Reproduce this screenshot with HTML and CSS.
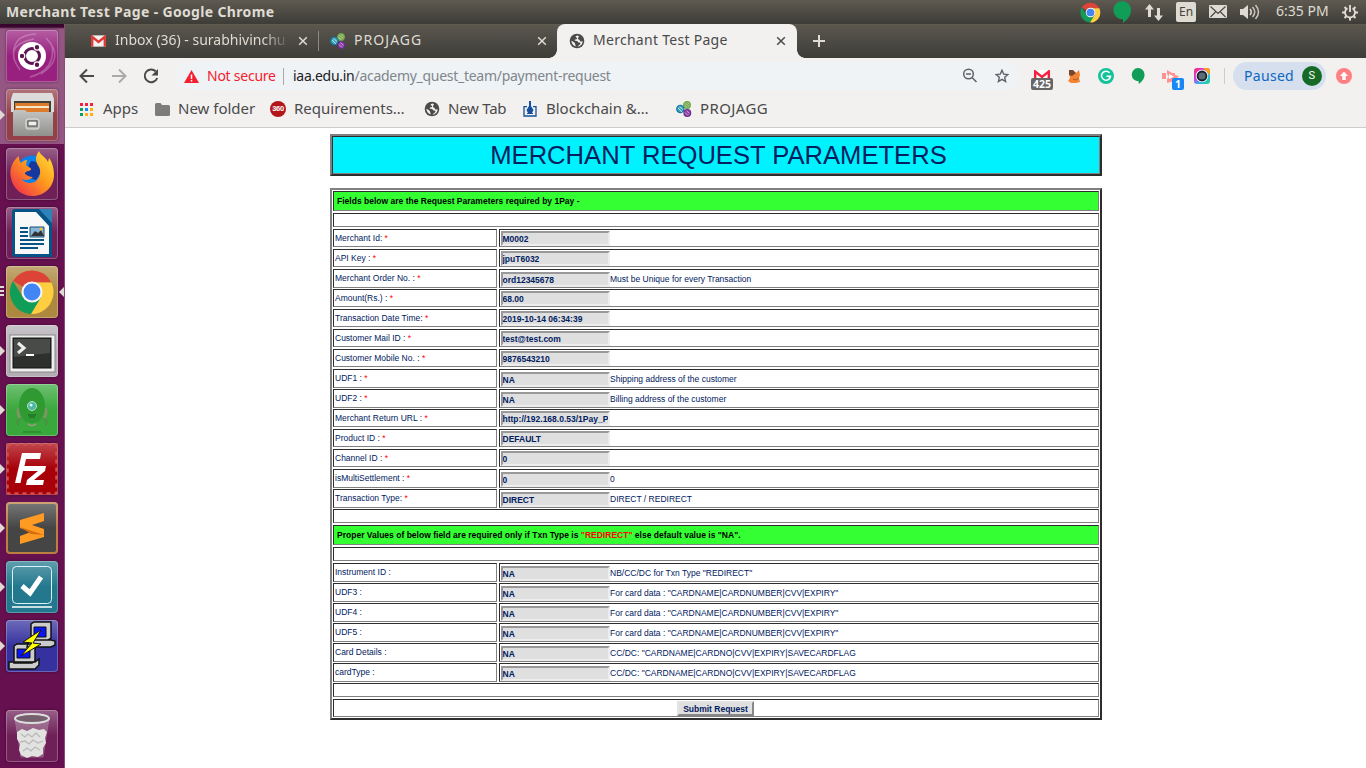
FILE: index.html
```html
<!DOCTYPE html>
<html lang="en">
<head>
<meta charset="utf-8">
<title>Merchant Test Page</title>
<link rel="stylesheet" href="styles.css">
</head>
<body>
<svg class="defs" width="0" height="0">
  <defs>
    <linearGradient id="steel" x1="0" y1="0" x2="0" y2="1"><stop offset="0" stop-color="#c4c4c2"/><stop offset="1" stop-color="#90908d"/></linearGradient>
    <linearGradient id="fire" x1="1" y1="0" x2="0" y2="1"><stop offset="0" stop-color="#ffe63a"/><stop offset=".45" stop-color="#ff9a1d"/><stop offset="1" stop-color="#ee1c52"/></linearGradient>
    <linearGradient id="rainbow" x1="0" y1="0" x2="1" y2="1"><stop offset="0" stop-color="#ff2b6a"/><stop offset=".35" stop-color="#d93be0"/><stop offset=".65" stop-color="#24b9f2"/><stop offset="1" stop-color="#27d67b"/></linearGradient>
    <symbol id="chrome" viewBox="0 0 48 48">
      <path d="M24 24 4.100 12.500A23 23 0 0 1 44.200 14H24z" fill="#db4437"/>
      <path d="M4.100 12.500A23 23 0 0 0 23 47L34 30 24 24 14.500 29.500z" fill="#0f9d58"/>
      <path d="M24 14h20.200A23 23 0 0 1 23 47l10.500-17.500L24 24z" fill="#ffcd40"/>
      <circle cx="24" cy="24" r="11" fill="#f5f5f5"/><circle cx="24" cy="24" r="8.800" fill="#4285f4"/>
    </symbol>
    <symbol id="hang" viewBox="0 0 18 22"><path d="M9 0a9 9 0 0 1 9 9.200c0 5.500-4 9.800-8 12.800v-3.800A9 9 0 0 1 9 0z" fill="#0f9d58"/></symbol>
    <symbol id="globe" viewBox="0 0 16 16"><circle cx="8" cy="8" r="7.300" fill="#4a4a4a"/><path d="M8.300 2.500C6.500 3.200 6 4 7.300 4.600c1.600.6.500 2-.9 1.900-1.300.3-.7 1.400.4 1.300 1.500 0 2.200.8 2.500 1.700.8.300 2-.2 2.200.7-.3 1.500-1.900 1.700-3.100 3.500 3-.3 5.200-2.500 5.300-5.700-1 .9-2.800.6-3-.7-.2-1-1.500-.6-1.800-1.500 0-1.200 1.200-1.500.9-2.700zM2.300 7.800c.2 2.500 1.700 4.700 4.200 5.600.4-1.300-.4-1.800-.6-2.900-.1-1.300-1.400-1.300-3.600-2.700z" fill="#f2f1f0"/></symbol>
    <symbol id="close" viewBox="0 0 10 10"><path d="m1.200 1.200 7.600 7.600M8.800 1.200 1.200 8.800" fill="none" stroke="currentColor" stroke-width="1.500"/></symbol>
    <symbol id="projagg" viewBox="0 0 16 16">
      <g fill="none" stroke-width="1.300"><circle cx="11" cy="4" r="3.300" stroke="#6da544" fill="#a5c783"/><path d="m8.500 3 4 3M10 1.500l3.500 3" stroke="#5e913b" stroke-width=".8"/><circle cx="4.300" cy="8" r="3.600" stroke="#187ba4" fill="#44a6be"/><path d="m2 7 4 4M3.500 5.500l3.500 3" stroke="#cfe9f3" stroke-width=".8"/><circle cx="11.300" cy="12" r="3.300" stroke="#6b2d90" fill="#8f48a8"/><path d="m9 11.500 3 3M10.500 9.500l3 3" stroke="#d0a8dc" stroke-width=".8"/></g>
    </symbol>
    <symbol id="gmail" viewBox="0 0 16 12"><path d="M0 0h16v12H0z" fill="#f3f3f3"/><path d="M1.300 12V1.500L8 7l6.700-5.500V12" fill="none" stroke="#dd3a34" stroke-width="2.500"/></symbol>
  </defs>
</svg>

<header class="panel">
  <span class="panel-title">Merchant Test Page - Google Chrome</span>
  <div class="tray">
    <svg class="t-chrome" width="21" height="21"><use href="#chrome"/></svg>
    <svg class="t-hang" width="18" height="22"><use href="#hang"/></svg>
    <svg class="t-net" width="18" height="17" viewBox="0 0 18 17" fill="#dfdbd2"><path d="M4.500 0 9 5.500H6V13H3V5.500H0zM13.500 17 9 11.500h3V4h3v7.500h3z"/></svg>
    <span class="t-lang">En</span>
    <svg class="t-mail" width="18" height="14" viewBox="0 0 18 14"><rect width="18" height="13" rx="1" fill="#dfdbd2"/><path d="m1.500 1.500 7.500 7 7.500-7M1.500 12 6.500 7M16.500 12l-5-5" fill="none" stroke="#4b4943" stroke-width="1.200"/></svg>
    <svg class="t-sound" width="20" height="18" viewBox="0 0 20 18"><path d="M0 6h3l5-4v14l-5-4H0z" fill="#dfdbd2"/><g fill="none" stroke="#dfdbd2" stroke-width="1.500"><path d="M10 6q2.500 3 0 6"/><path d="M12.500 4q4.500 5 0 10" opacity=".85"/><path d="M15.500 2q6 7 0 14" opacity=".85"/></g></svg>
    <span class="t-time">6:35 PM</span>
    <svg class="t-gear" width="16" height="17" viewBox="0 0 16 17" fill="none" stroke="#dfdbd2"><path d="M5.500 4.200A5 5 0 1 0 10.500 4.200M8 1v7" stroke-width="1.900"/><path d="M8 13.500V16.500M0 8.500h3M13 8.500h3M2.500 14l2-2M11.500 12l2 2M2.500 3l2 2M13.500 3l-2 2" stroke-width="2"/></svg>
  </div>
</header>

<div class="desktop">
  <nav class="launcher">
    <div class="tile ubuntu"><svg viewBox="0 0 52 52"><g fill="none" stroke="#fff" opacity=".25"><path d="M8 30Q4 5 30 4M14 40Q-4 15 28 9M40 8q20 20-5 36M46 15Q50 40 24 47" stroke-width="1.500"/></g><circle cx="26" cy="26" r="14" fill="#fff"/><circle cx="26" cy="26" r="7.500" fill="none" stroke="#5c1550" stroke-width="3"/><g stroke="#fff" stroke-width="1.200" fill="#5c1550"><circle cx="16" cy="26" r="2.800"/><circle cx="31" cy="17.300" r="2.800"/><circle cx="31" cy="34.700" r="2.800"/></g></svg></div>
    <div class="tile files"><i class="run"></i><svg viewBox="0 0 52 52"><path d="M7 4h39l2 6v13H5V10z" fill="#dcdcda"/><path d="M8 12h37v12H8z" fill="#3f3f3e"/><path d="M9 14h34v9H9z" fill="#de7b2a"/><path d="M10 17h33v2H10z" fill="#f9e7cc"/><path d="M7 21h12l2 2h26v24H7z" fill="url(#steel)"/><rect x="20" y="30" width="13" height="10" rx="2" fill="#b0b0ac" stroke="#e3e3e1"/><rect x="22" y="32" width="9" height="5" fill="#eee" stroke="#444"/></svg></div>
    <div class="tile plain"><svg viewBox="0 0 52 52"><circle cx="27" cy="25" r="17.500" fill="#0a84ea"/><path d="M25 13q10 0 10 11l-5 8-13-4z" fill="#1637a0"/><path d="M33 3c-5 7-3 11 0 16 3 6 0 15-8 16-5 0-8-2-9-4 4 2 8 1 11-2-4 0-6-2-8-3 0-3 4-3 6-4 1-2-3-3-5-5l1-5c-3 0-5 2-6 3-2-2-2-5-2-7C6 13 3 22 5 30c2 11 11 18 22 18s21-9 21-21c0-7-2-13-5-17l-1 4C40 9 35 8 33 3z" fill="url(#fire)"/></svg></div>
    <div class="tile plain"><svg viewBox="0 0 52 52"><path d="M9 2h37v48H9q-3 0-3-3V5q0-3 3-3z" fill="#075386"/><path d="M9 5h21l13 14v28H9z" fill="#f8f8f8"/><path d="M33 2h13v14z" fill="#2d82b7"/><path d="M14 21h8M14 25h8M14 29h8M14 33h24M14 37h24M14 41h18" stroke="#075386" stroke-width="2"/><path d="M24 20h14v10H24z" fill="#86b6dc" stroke="#124f73"/><path d="m25 29 4-5 3 2 3-3 3 6z" fill="#333"/><circle cx="35" cy="22" r="1.500" fill="#f7bf29"/></svg></div>
    <div class="tile gold"><i class="run multi"></i><i class="focus"></i><svg viewBox="0 0 52 52"><use href="#chrome" x="3" y="3" width="46" height="46"/></svg></div>
    <div class="tile term"><i class="run"></i><svg viewBox="0 0 52 52"><rect x="4" y="10" width="45" height="37" fill="#eee" stroke="#888"/><rect x="7" y="13" width="38" height="30" fill="#2e302e" stroke="#111"/><path d="M8 14h36v14L8 32z" fill="#494b48"/><path d="m12 18 6 5-6 5" fill="none" stroke="#eee" stroke-width="3"/><path d="M20 30h8" stroke="#fff" stroke-width="2"/></svg></div>
    <div class="tile green"><i class="run"></i><svg viewBox="0 0 52 52"><path d="M14 34q-3-5-1-10M38 34q3-5 1-10" fill="none" stroke="#7d9560" stroke-width="3.500"/><path d="M26 4c7 0 13 8 13 18S34 39 26 39 13 32 13 22 19 4 26 4z" fill="#2f9a32"/><circle cx="26" cy="22" r="4.500" fill="#4db7a3" stroke="#b8e1ca"/><circle cx="25" cy="21" r="1.500" fill="#d2fff0"/><path d="M22 31h8M23 33h6" stroke="#17641e"/><path d="M15 35q-5 0-3 6M37 35q5 0 3 6" fill="none" stroke="#4f8f44" stroke-width="2"/><path d="M22 40q4 3 8 0" stroke="#8ca06d" stroke-width="2" fill="none"/><path d="M17 48h18" stroke="#237b28"/></svg></div>
    <div class="tile red"><i class="run"></i><svg viewBox="0 0 52 52"><rect x="1.500" y="1.500" width="49" height="49" fill="none" stroke="#c95353" stroke-width="2.500" stroke-dasharray="4 4"/><path d="M16 10h19l-1 6H20l-1.500 7H30l-1 5H17l-2.500 12H9z" fill="#fff"/><path d="M23 23h17l-1 5-11 9h10l-1 5H20l1-5 11-9H22z" fill="#fff"/></svg></div>
    <div class="tile sublime"><i class="run"></i><svg viewBox="0 0 52 52"><path d="m14 18 24-7v8l-12 4 12 4v8l-24 7v-8l11-4-11-4z" fill="#ff9b22"/><path d="m14 25 24 8-13-1z" fill="#d76c0b"/></svg></div>
    <div class="tile teal"><i class="run"></i><svg viewBox="0 0 52 52"><rect x="6.500" y="5.500" width="39" height="37" rx="4" fill="none" stroke="#d9f4f7"/><path d="M6 46h40" stroke="#fff" stroke-width="1.500"/><path d="m16 25 8 7 11-16" fill="none" stroke="#fff" stroke-width="5"/></svg></div>
    <div class="tile putty"><i class="run"></i><svg viewBox="0 0 52 52"><g fill="#ccc" stroke="#111" stroke-width="1.500"><path d="m25 4 3-2h17v16l-3 2H25zM23 20h22l4 1v4l-4 2H21zM8 26l3-2h18v17l-3 2H8zM3 42h26l4-3v6l-4 4H3z"/></g><path d="M28 7h12v10H28zM11 29h13v9H11z" fill="#0a14f5" stroke="#111"/><path d="m35 10-18 12 9 1-11 13 20-12-8-1z" fill="#ff0" stroke="#111"/></svg></div>
    <div class="tile plain trash"><svg viewBox="0 0 52 52"><path d="m9 8 6 39h22l6-39" fill="#d9d9d9" opacity=".3" stroke="#eee"/><path d="m11 22 5-3 5 2 6-3 6 2 5-1 3 3-2 6 1 5-3 5v6l-5 3-6-1-5 2-6-3-2-5 1-6-3-5z" fill="#e2e2e0"/><path d="m15 24 4 3 3-3 4 3 4-4 4 4M14 32l5-1 4 3 4-4 5 3 5-2M17 41l4-3 4 3 4-4 5 3" fill="none" stroke="#b9b9b7" stroke-width="1.300"/><ellipse cx="26" cy="8.500" rx="17" ry="4.500" fill="#76606e" stroke="#ddd" stroke-width="2"/></svg></div>
  </nav>

  <main class="browser">
    <div class="tabs">
      <div class="tab tab-mail"><svg width="15" height="12"><use href="#gmail"/></svg><span class="tab-text fade">Inbox (36) - surabhivinchu</span><svg class="x" width="10" height="10"><use href="#close"/></svg></div>
      <div class="tab tab-proj"><svg width="16" height="16"><use href="#projagg"/></svg><span class="tab-text caps">PROJAGG</span><svg class="x" width="10" height="10"><use href="#close"/></svg></div>
      <div class="tab active"><svg width="16" height="16"><use href="#globe"/></svg><span class="tab-text">Merchant Test Page</span><svg class="x" width="10" height="10"><use href="#close"/></svg></div>
      <svg class="plus" width="12" height="12" viewBox="0 0 12 12"><path d="M6 0v12M0 6h12" stroke="#dfdbd2" stroke-width="2"/></svg>
    </div>
    <div class="toolbar">
      <svg class="nav" width="16" height="16" viewBox="0 0 16 16" fill="none" stroke="#4a4a4a" stroke-width="2"><path d="M15 8H2M8 1.500 1.500 8 8 14.500"/></svg>
      <svg class="nav" width="16" height="16" viewBox="0 0 16 16" fill="none" stroke="#aaa" stroke-width="2"><path d="M1 8h13M8 1.500 14.500 8 8 14.500"/></svg>
      <svg class="nav" width="16" height="16" viewBox="0 0 16 16"><path d="M12.700 3.300A6.400 6.400 0 1 0 14.200 10" fill="none" stroke="#4a4a4a" stroke-width="2"/><path d="M15 1v6.500H8.500z" fill="#4a4a4a"/></svg>
      <div class="omnibox">
        <svg width="15" height="13" viewBox="0 0 15 13"><path d="M7.500 0 15 13H0z" fill="#f5202f"/><path d="M7.500 4.500V9M7.500 10v1.500" stroke="#fff" stroke-width="1.500"/></svg>
        <span class="insecure">Not secure</span>
        <span class="url"><b>iaa.edu.in</b>/academy_quest_team/payment-request</span>
        <svg class="mag" width="16" height="16" viewBox="0 0 16 16" fill="none" stroke="#5f6368" stroke-width="1.500"><circle cx="6.500" cy="6" r="4.800"/><path d="m10 9.500 4.500 4.500M4 6h5"/></svg>
        <svg class="star" width="14" height="14" viewBox="0 0 14 14"><path d="m7 1.200 1.700 3.900 4.200.4-3.200 2.800.9 4.200L7 10.300l-3.600 2.200.9-4.200-3.200-2.800 4.200-.4z" fill="none" stroke="#5f6368" stroke-width="1.400"/></svg>
      </div>
      <div class="ext e-mail"><svg width="16" height="12" viewBox="0 0 16 12"><path d="M0 0h16v12H0z" fill="#fff"/><path d="M1.200 12V1.500L8 7l6.800-5.500V12" fill="none" stroke="#f5203f" stroke-width="2.400"/></svg><span class="badge">425</span></div>
      <div class="ext e-fox"><svg width="12" height="13" viewBox="0 0 12 13"><path d="m1 0 3 2 4 1 3-3 1 5-1 3 1 4-4 1H3l-3-2 2-3-1-4z" fill="#f48332"/><path d="M1 0h4l3 3-4 3-3-1z" fill="#76472c"/><path d="m5 9 3 1 3-2" stroke="#b75622" fill="none"/></svg></div>
      <div class="ext"><svg width="16" height="16" viewBox="0 0 16 16"><circle cx="8" cy="8" r="8" fill="#15c39a"/><path d="M11.500 4.800a4.500 4.500 0 1 0 1 3.500H8.500M11 10l2-1.700" fill="none" stroke="#fff" stroke-width="1.500"/></svg></div>
      <div class="ext"><svg width="14" height="16"><use href="#hang"/></svg></div>
      <div class="ext e-one"><svg width="17" height="13" viewBox="0 0 17 13"><path d="M0 3h4v6H0zM5 0l5 3h3v2l4 1-5 5-7 2V9l2-2-2-3z" fill="#ff9292"/><path d="m7 4 5 2.500L7 9z" fill="#fff"/></svg><span class="badge blue">1</span></div>
      <div class="ext"><svg width="16" height="16" viewBox="0 0 16 16"><rect width="16" height="16" rx="3" fill="url(#rainbow)"/><path d="M9 0h4q3 0 3 3v4z" fill="#ff9f16"/><circle cx="8" cy="8" r="6.200" fill="#fff"/><circle cx="8" cy="8" r="4.500" fill="#5b6b75" stroke="#172029" stroke-width="1.800"/></svg></div>
      <div class="divider"></div>
      <div class="paused"><span>Paused</span><i>S</i></div>
      <svg class="update" width="16" height="16" viewBox="0 0 16 16"><circle cx="8" cy="8" r="8" fill="#ff8080"/><path d="M8 3.500 12 8H9.700v4H6.300V8H4z" fill="#fff"/></svg>
    </div>
    <div class="bookmarks">
      <div class="bm b1"><svg width="16" height="16" viewBox="0 0 16 16"><path d="M1 2h3v3H1zM6 2h3v3H6z" fill="#f4203f"/><path d="M11 2h3v3h-3z" fill="#f4203f"/><path d="M1 7h3v3H1zM1 12h3v3H1z" fill="#0ca060"/><path d="M6 7h3v3H6z" fill="#1688f2"/><path d="M11 7h3v3h-3zM6 12h3v3H6zM11 12h3v3h-3z" fill="#fdaf15"/></svg><span>Apps</span></div>
      <div class="bm b2"><svg width="15" height="13" viewBox="0 0 15 13"><path d="M1.500 0h4L7 2h6.500Q15 2 15 3.500v8q0 1.500-1.500 1.500h-12Q0 13 0 11.500v-10Q0 0 1.500 0z" fill="#7c7c7c"/></svg><span>New folder</span></div>
      <div class="bm b3"><i class="b360">360</i><span>Requirements…</span></div>
      <div class="bm b4"><svg width="16" height="16"><use href="#globe"/></svg><span>New Tab</span></div>
      <div class="bm b5"><svg width="14" height="16" viewBox="0 0 14 16"><path d="M4 5.700H1V15h12V5.700h-3" fill="none" stroke="#174f9c" stroke-width="1.300"/><path d="M6 0h2v5l2.500 4L9 12h1v1H4v-1h1L3.500 9 6 5z" fill="#174f9c"/></svg><span>Blockchain &amp;…</span></div>
      <div class="bm b6"><svg width="16" height="16"><use href="#projagg"/></svg><span class="caps">PROJAGG</span></div>
    </div>
    <section class="page">
      <h1 class="title"><span>MERCHANT REQUEST PARAMETERS</span></h1>
      <form class="params">
        <div class="head">Fields below are the Request Parameters required by 1Pay -</div>
        <div class="blank"></div>
        <div class="row"><label>Merchant Id: <em>*</em></label><div><span class="field">M0002</span></div></div>
        <div class="row"><label>API Key : <em>*</em></label><div><span class="field">jpuT6032</span></div></div>
        <div class="row"><label>Merchant Order No. : <em>*</em></label><div><span class="field">ord12345678</span>Must be Unique for every Transaction</div></div>
        <div class="row"><label>Amount(Rs.) : <em>*</em></label><div><span class="field">68.00</span></div></div>
        <div class="row"><label>Transaction Date Time: <em>*</em></label><div><span class="field">2019-10-14 06:34:39</span></div></div>
        <div class="row"><label>Customer Mail ID : <em>*</em></label><div><span class="field">test@test.com</span></div></div>
        <div class="row"><label>Customer Mobile No. : <em>*</em></label><div><span class="field">9876543210</span></div></div>
        <div class="row"><label>UDF1 : <em>*</em></label><div><span class="field">NA</span>Shipping address of the customer</div></div>
        <div class="row"><label>UDF2 : <em>*</em></label><div><span class="field">NA</span>Billing address of the customer</div></div>
        <div class="row"><label>Merchant Return URL : <em>*</em></label><div><span class="field">http://192.168.0.53/1Pay_P</span></div></div>
        <div class="row"><label>Product ID : <em>*</em></label><div><span class="field">DEFAULT</span></div></div>
        <div class="row"><label>Channel ID : <em>*</em></label><div><span class="field">0</span></div></div>
        <div class="row"><label>isMultiSettlement : <em>*</em></label><div><span class="field">0</span>0</div></div>
        <div class="row"><label>Transaction Type: <em>*</em></label><div><span class="field">DIRECT</span>DIRECT / REDIRECT</div></div>
        <div class="blank"></div>
        <div class="head">Proper Values of below field are required only if Txn Type is <em>"REDIRECT"</em> else default value is "NA".</div>
        <div class="blank"></div>
        <div class="row"><label>Instrument ID :</label><div><span class="field">NA</span>NB/CC/DC for Txn Type "REDIRECT"</div></div>
        <div class="row"><label>UDF3 :</label><div><span class="field">NA</span>For card data : "CARDNAME|CARDNUMBER|CVV|EXPIRY"</div></div>
        <div class="row"><label>UDF4 :</label><div><span class="field">NA</span>For card data : "CARDNAME|CARDNUMBER|CVV|EXPIRY"</div></div>
        <div class="row"><label>UDF5 :</label><div><span class="field">NA</span>For card data : "CARDNAME|CARDNUMBER|CVV|EXPIRY"</div></div>
        <div class="row"><label>Card Details :</label><div><span class="field">NA</span>CC/DC: "CARDNAME|CARDNO|CVV|EXPIRY|SAVECARDFLAG</div></div>
        <div class="row"><label>cardType :</label><div><span class="field">NA</span>CC/DC: "CARDNAME|CARDNO|CVV|EXPIRY|SAVECARDFLAG</div></div>
        <div class="blank"></div>
        <div class="submit"><button type="button">Submit Request</button></div>
      </form>
    </section>
  </main>
</div>
</body>
</html>
```
FILE: styles.css
```css
* { box-sizing: border-box; }
body { margin: 0; width: 1366px; height: 768px; overflow: hidden; background: #fff; font-family: "Noto Sans", "Open Sans", sans-serif; white-space: nowrap; }
svg { display: block; flex: none; }
.defs { position: absolute; }
em, i, b { font-style: normal; font-weight: inherit; }

.panel { height: 24px; display: flex; justify-content: space-between; align-items: center; background: linear-gradient(#5e5a51, #3d3c37); color: #dfdbd2; padding: 0 8px 0 6px; }
.panel-title { font-size: 14px; font-weight: 700; line-height: 24px; letter-spacing: .34px; }
.tray { display: flex; align-items: center; height: 24px; }
.t-chrome { margin-right: 12px; }
.t-hang { margin-right: 14px; }
.t-net { margin-right: 13px; }
.t-lang { width: 20px; height: 20px; border-radius: 2px; background: #dfdbd2; color: #45433d; font-size: 12px; line-height: 20px; text-align: center; margin-right: 13px; }
.t-mail { margin-right: 13px; }
.t-sound { margin-right: 16px; }
.t-time { width: 66px; font-size: 14px; line-height: 22px; height: 24px; }

.desktop { display: flex; height: 744px; }
.launcher { width: 65px; flex: none; display: flex; flex-direction: column; gap: 7px; padding: 6px 0 0 6px; background: linear-gradient(#39062f 0, #39062f 3px, transparent 5px), linear-gradient(#955684 0, #955684 120px, #66104f 120px, #66104f 100%); border-right: 1px solid #8b4a7a; }
.tile { position: relative; width: 52px; height: 52px; flex: none; border-radius: 4px; box-shadow: inset 0 0 0 1px rgba(255,255,255,.25), 0 0 3px rgba(0,0,0,.4); }
.tile svg { position: relative; z-index: 1; width: 52px; height: 52px; }
.tile::after { content: ""; position: absolute; inset: 0; border-radius: 4px; background: linear-gradient(rgba(255,255,255,.28), transparent 50%); }
.ubuntu { background: #98207f; }
.files { background: #93404a; }
.plain { background: #6f2059; }
.gold { background: #ad8940; }
.term { background: #b4adb4; }
.green { background: #39a83c; }
.red { background: #a80008; }
.sublime { background: #454545; box-shadow: inset 0 0 0 2px #bb7f40; }
.teal { background: #23788e; }
.putty { background: #35329f; }
.trash { margin-top: 31px; }
.run, .focus { position: absolute; left: -6px; top: 21px; border: 5px solid transparent; border-left-color: #dfdbd2; border-right: 0; }
.multi { border: 0; top: 20px; width: 4px; height: 11px; background: repeating-linear-gradient(#dfdbd2 0 2px, #66104f 2px 4px); }
.focus { left: auto; right: -6px; border: 5px solid transparent; border-right-color: #dfdbd2; border-left: 0; }

.browser { flex: 1; min-width: 0; display: flex; flex-direction: column; color: #4a4a4a; }
.tabs { height: 34px; display: flex; align-items: center; background: linear-gradient(#69604f 0, #5a574f 1px, #3d3c37); font-size: 14px; }
.tab { height: 34px; display: flex; align-items: center; color: #dfdbd2; }
.tab .x { margin-left: auto; }
.tab-text { margin-left: 8px; line-height: 20px; padding-bottom: 2px; letter-spacing: .28px; }
.tab-mail { width: 254px; padding: 0 11px 0 26px; position: relative; }
.tab-mail::after { content: ""; position: absolute; right: 0; top: 7px; width: 1px; height: 20px; background: #8c8981; }
.fade { width: 177px; margin-left: 9px; letter-spacing: 0; overflow: hidden; -webkit-mask-image: linear-gradient(90deg, #000 148px, transparent 175px); mask-image: linear-gradient(90deg, #000 148px, transparent 175px); }
.tab-proj { width: 238px; padding: 0 10px 0 11px; }
.tab .caps { letter-spacing: 1.050px; }
.active { width: 240px; padding: 0 11px 0 12px; background: #f2f1f0; color: #4a4a4a; border-radius: 8px 8px 0 0; position: relative; }
.active::before, .active::after { content: ""; position: absolute; bottom: 0; width: 8px; height: 8px; left: -8px; background: radial-gradient(circle at 0 0, transparent 7.5px, #f2f1f0 8px); }
.active::after { left: auto; right: -8px; background: radial-gradient(circle at 100% 0, transparent 7.5px, #f2f1f0 8px); }
.plus { margin-left: 16px; }

.toolbar { height: 36px; display: flex; align-items: center; background: #f2f1f0; padding-left: 14px; }
.nav { margin-right: 16px; }
.omnibox { width: 844px; height: 28px; border-radius: 14px; background: #eff3f6; display: flex; align-items: center; padding: 0 10px 0 9px; font-size: 14px; }
.omnibox span { padding-bottom: 1px; }
.insecure { margin-left: 8px; width: 77px; color: #f5202f; border-right: 1px solid #aaa; line-height: 16px; letter-spacing: -.25px; }
.url { margin-left: 9px; color: #80868b; letter-spacing: -.28px; }
.url b { color: #202124; }
.mag { margin-left: auto; margin-right: 17px; }
.ext { position: relative; width: 16px; height: 16px; margin-left: 16px; display: flex; align-items: center; justify-content: center; }
.e-mail { margin-left: 15px; }
.badge { position: absolute; left: -3px; top: 10px; width: 22px; height: 12px; border-radius: 2px; background: #666; color: #fff; font-size: 10.500px; font-weight: 700; line-height: 12px; text-align: center; }
.badge.blue { left: 10px; width: 12px; background: #1687f5; }
.divider { width: 1px; height: 16px; margin: 0 8px 0 14px; background: #ccc; }
.paused { width: 93px; height: 28px; border-radius: 14px; background: #d5dfee; color: #0d66c2; display: flex; align-items: center; justify-content: space-between; padding: 0 4px 0 11px; font-size: 14px; letter-spacing: .3px; }
.paused span { padding-bottom: 2px; }
.paused i { width: 20px; height: 20px; border-radius: 50%; background: #176a25; color: #fff; font: 11px/20px Roboto, sans-serif; text-align: center; }
.update { margin-left: 10px; }

.bookmarks { height: 34px; background: #f2f1f0; border-bottom: 1px solid #cfcdca; display: flex; padding-left: 14px; font-size: 15px; }
.bm { display: flex; align-items: center; gap: 8px; height: 30px; flex: none; }
.bm span { line-height: 20px; padding-bottom: 2px; }
.b1 { width: 76px; } .b2 { width: 115px; } .b3 { width: 154px; } .b4 { width: 99px; letter-spacing: -.25px; } .b5 { width: 153px; gap: 9px; }
.bm .caps { letter-spacing: .4px; }
.b360 { width: 16px; height: 16px; border-radius: 50%; background: #b4151b; color: #fff; font: 700 7.500px/16px "Liberation Sans", sans-serif; text-align: center; letter-spacing: -.3px; }

.page { padding: 6px 0 0 265px; font-family: "Liberation Sans", Arial, sans-serif; font-size: 8.500px; color: #002060; }
.title { margin: 0 0 12px; width: 772px; height: 42px; border: 2px solid; border-color: #808080 #2d2d2d #2d2d2d #808080; font-size: 25.600px; font-weight: 400; text-align: center; }
.title span { display: block; height: 38px; line-height: 36px; padding-left: 5px; background: #00f2ff; border: 1px solid; border-color: #2d2d2d #808080 #808080 #2d2d2d; }
.params { width: 772px; border: 2px solid; border-color: #808080 #2d2d2d #2d2d2d #808080; padding: 1px; display: grid; gap: 2px; }
.head, .blank, .submit, .row > * { border: 1px solid; border-color: #2d2d2d #808080 #808080 #2d2d2d; }
.head { height: 20px; line-height: 18px; padding-left: 3px; background: #33ff33; color: #000; font-weight: 700; letter-spacing: .012px; }
.blank { height: 14px; }
.row { display: grid; grid-template-columns: 164px 600px; gap: 2px; height: 18px; }
.row label { padding-left: 1px; line-height: 16px; }
.row > div { padding-left: 1px; display: flex; align-items: center; line-height: 16px; padding-top: 1px; }
em { color: #f00; }
.field { width: 109px; height: 15px; border: 2px solid; border-color: #999 #ededed #ededed #999; background: #dfdfdf; font-weight: 700; line-height: 12px; overflow: hidden; text-indent: -.5px; }
.submit { height: 18px; display: flex; justify-content: center; padding: 1px 1px 0 0; }
button { width: 77px; height: 15px; padding: 1px 0 0; border: 2px solid; border-color: #e3e3e3 #888 #888 #e3e3e3; background: #dfdfdf; color: #002060; font: 700 8.500px/11px "Liberation Sans", Arial, sans-serif; }
```
